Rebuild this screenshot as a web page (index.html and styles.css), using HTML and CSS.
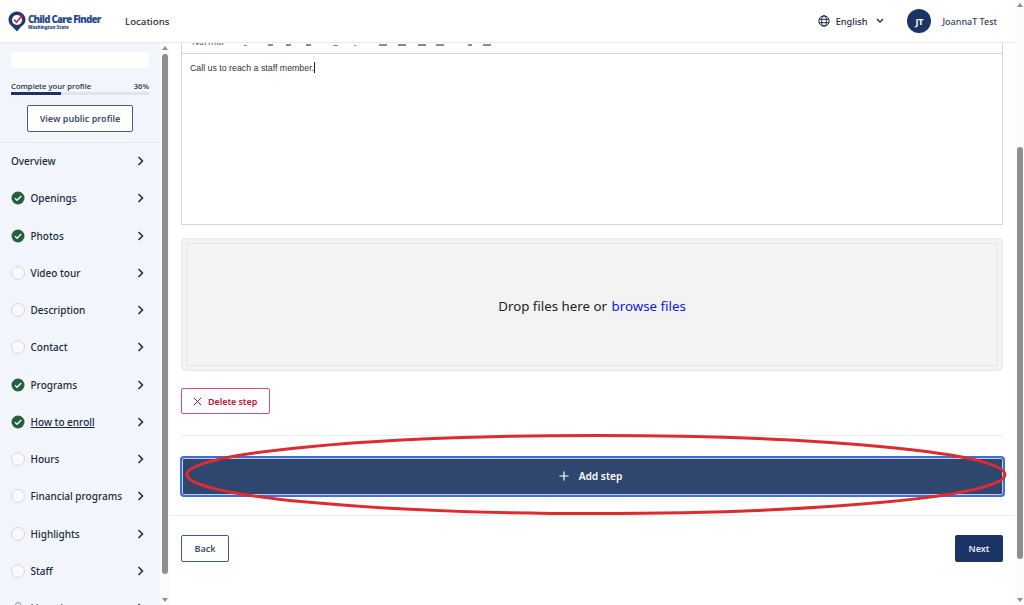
FILE: index.html
```html
<!DOCTYPE html>
<html lang="en">
<head>
<meta charset="utf-8">
<title>How to enroll</title>
<link rel="stylesheet" href="styles.css">
</head>
<body>
<div class="page">
  <div class="column">
    <header class="header">
      <div class="logo">
        <svg class="logo-pin" width="18" height="21" viewBox="0 0 18 21">
          <path d="M9 .5C4.200.5.500 4.200.500 8.800c0 3.200 1.900 5.400 4.200 7.300L9 20.500l3.800-4.400c2.500-1.900 4.700-4.100 4.700-7.300C17.500 4.200 13.800.5 9 .5z" fill="#1f3a6e"/>
          <circle cx="9" cy="9" r="5" fill="#fff"/>
          <path d="M6 8.500l2.500 2.700 6-7.200" fill="none" stroke="#c8203c" stroke-width="1.600"/>
        </svg>
        <div class="logo-text">
          <div class="logo-name">Child Care Finder</div>
          <div class="logo-sub">Washington State</div>
        </div>
      </div>
      <div class="nav-link">Locations</div>
      <div class="lang">
        <svg width="12" height="12" viewBox="0 0 12 12" fill="none" stroke="#1b2a41" stroke-width="1">
          <circle cx="6" cy="6" r="5.200"/><ellipse cx="6" cy="6" rx="2.400" ry="5.200"/><path d="M1 4.300h10M1 7.700h10"/>
        </svg>
        <span>English</span>
        <svg class="lang-caret" width="8" height="6" viewBox="0 0 8 6" fill="none" stroke="#1b2a41" stroke-width="1.300"><path d="M1 1l3 3 3-3"/></svg>
      </div>
      <div class="avatar">JT</div>
      <div class="user">JoannaT Test</div>
    </header>
    <div class="body">
      <aside class="sidebar">
        <div class="side-inner">
          <div class="name-box"></div>
          <div class="progress-row"><span>Complete your profile</span><span>36%</span></div>
          <div class="progress"><div class="progress-fill"></div></div>
          <div class="public-button">View public profile</div>
          <div class="side-line"></div>
          <ul class="menu">
            <li class="item"><span class="item-text">Overview</span><svg class="chev" viewBox="0 0 7 10"><path d="M1.500 1l4 4-4 4"/></svg></li>
            <li class="item"><svg class="check" viewBox="0 0 14 14"><circle cx="7" cy="7" r="6.500"/><path d="M4 7.200l2.100 2.100L10.200 5"/></svg><span class="item-text">Openings</span><svg class="chev" viewBox="0 0 7 10"><path d="M1.500 1l4 4-4 4"/></svg></li>
            <li class="item"><svg class="check" viewBox="0 0 14 14"><circle cx="7" cy="7" r="6.500"/><path d="M4 7.200l2.100 2.100L10.200 5"/></svg><span class="item-text">Photos</span><svg class="chev" viewBox="0 0 7 10"><path d="M1.500 1l4 4-4 4"/></svg></li>
            <li class="item"><span class="circle"></span><span class="item-text">Video tour</span><svg class="chev" viewBox="0 0 7 10"><path d="M1.500 1l4 4-4 4"/></svg></li>
            <li class="item"><span class="circle"></span><span class="item-text">Description</span><svg class="chev" viewBox="0 0 7 10"><path d="M1.500 1l4 4-4 4"/></svg></li>
            <li class="item"><span class="circle"></span><span class="item-text">Contact</span><svg class="chev" viewBox="0 0 7 10"><path d="M1.500 1l4 4-4 4"/></svg></li>
            <li class="item"><svg class="check" viewBox="0 0 14 14"><circle cx="7" cy="7" r="6.500"/><path d="M4 7.200l2.100 2.100L10.200 5"/></svg><span class="item-text">Programs</span><svg class="chev" viewBox="0 0 7 10"><path d="M1.500 1l4 4-4 4"/></svg></li>
            <li class="item"><svg class="check" viewBox="0 0 14 14"><circle cx="7" cy="7" r="6.500"/><path d="M4 7.200l2.100 2.100L10.200 5"/></svg><span class="item-text current">How to enroll</span><svg class="chev" viewBox="0 0 7 10"><path d="M1.500 1l4 4-4 4"/></svg></li>
            <li class="item"><span class="circle"></span><span class="item-text">Hours</span><svg class="chev" viewBox="0 0 7 10"><path d="M1.500 1l4 4-4 4"/></svg></li>
            <li class="item"><span class="circle"></span><span class="item-text">Financial programs</span><svg class="chev" viewBox="0 0 7 10"><path d="M1.500 1l4 4-4 4"/></svg></li>
            <li class="item"><span class="circle"></span><span class="item-text">Highlights</span><svg class="chev" viewBox="0 0 7 10"><path d="M1.500 1l4 4-4 4"/></svg></li>
            <li class="item"><span class="circle"></span><span class="item-text">Staff</span><svg class="chev" viewBox="0 0 7 10"><path d="M1.500 1l4 4-4 4"/></svg></li>
            <li class="item"><svg class="lock" viewBox="0 0 14 14"><rect x="2.500" y="6" width="9" height="7" rx="1"/><path d="M4.500 6V4a2.500 2.500 0 0 1 5 0v2"/></svg><span class="item-text">Licensing</span><svg class="chev" viewBox="0 0 7 10"><path d="M1.500 1l4 4-4 4"/></svg></li>
          </ul>
        </div>
        <div class="scrollbar side-bar">
          <span class="arrow-up"></span>
          <span class="thumb"></span>
          <span class="arrow-down"></span>
        </div>
      </aside>
      <main class="main">
        <div class="editor">
          <div class="toolbar">
            <span class="tool-name">Normal</span>
            <span class="tool t1"></span><span class="tool t2"></span><span class="tool t3"></span><span class="tool t4"></span>
            <span class="tool t5"></span><span class="tool t6"></span><span class="tool t7"></span><span class="tool t8"></span>
            <span class="tool t9"></span><span class="tool t10"></span><span class="tool t11"></span><span class="tool t12"></span>
          </div>
          <div class="editor-body">Call us to reach a staff member.<span class="caret"></span></div>
        </div>
        <div class="drop">
          <div class="drop-inner">Drop files here or&nbsp;<span class="browse">browse files</span></div>
        </div>
        <div class="delete-button">
          <svg width="9" height="9" viewBox="0 0 9 9" fill="none" stroke="#b5123f" stroke-width="1"><path d="M.8.8l7.400 7.400M8.200.8L.8 8.200"/></svg>
          <span>Delete step</span>
        </div>
        <div class="rule"></div>
        <div class="add-button">
          <svg width="10" height="10" viewBox="0 0 10 10" fill="none" stroke="#fff" stroke-width="1.200"><path d="M5 .5v9M.5 5h9"/></svg>
          <span>Add step</span>
        </div>
        <div class="footer">
          <div class="back">Back</div>
          <div class="next">Next</div>
        </div>
      </main>
    </div>
  </div>
  <div class="scrollbar page-bar">
    <span class="arrow-up"></span>
    <span class="thumb"></span>
    <span class="arrow-down"></span>
  </div>
  <svg class="annotation" width="1024" height="605" viewBox="0 0 1024 605">
    <ellipse cx="596" cy="474.500" rx="409" ry="39" fill="none" stroke="#dd2c2f" stroke-width="3"/>
  </svg>
</div>
</body>
</html>
```
FILE: styles.css
```css
* { box-sizing: border-box; }
html, body { margin: 0; height: 100%; overflow: hidden; }
body { background: #fff; font-family: "Noto Sans", "Open Sans", sans-serif; color: #1b2a41; }
.page { position: relative; display: flex; width: 1024px; height: 605px; overflow: hidden; }
.column { width: 1015px; display: flex; flex-direction: column; }

.header { position: relative; z-index: 2; flex: none; height: 43px; display: flex; align-items: center; background: #fff; border-bottom: 1px solid #e9ebef; padding-left: 8px; }
.logo { display: flex; align-items: center; width: 117px; gap: 2px; }
.logo-pin { flex: none; margin-top: 1px; }
.logo-text { display: flex; flex-direction: column; margin-top: 2px; }
.logo-name { font-family: "Open Sans", sans-serif; font-size: 9.700px; line-height: 11px; font-weight: 800; letter-spacing: -.72px; color: #2a4a8b; white-space: nowrap; }
.logo-sub { font-size: 4.500px; line-height: 5px; font-weight: 800; color: #1f3a6e; white-space: nowrap; }
.nav-link { font-size: 9.700px; font-weight: 500; color: #1b2a41; }
.lang { margin-left: auto; display: flex; align-items: center; font-size: 9.200px; font-weight: 500; }
.lang span { margin-left: 6px; }
.lang-caret { margin-left: 9px; }
.avatar { width: 24px; height: 24px; border-radius: 50%; background: #1c3464; color: #fff; font-size: 9px; font-weight: 700; display: flex; align-items: center; justify-content: center; margin-left: 23px; }
.user { font-size: 9px; font-weight: 500; margin-left: 11px; margin-right: 18px; color: #33415a; }

.body { flex: 1; min-height: 0; display: flex; }
.sidebar { flex: none; width: 170px; display: flex; background: #f2f6fc; overflow: hidden; }
.side-inner { width: 160px; flex: none; padding: 9px 11px 0; }
.name-box { height: 16px; background: #fff; border-radius: 4px; }
.progress-row { display: flex; justify-content: space-between; font-size: 7.700px; line-height: 11px; font-weight: 500; margin-top: 13px; }
.progress { height: 3px; background: #dfe3ee; margin-top: 0; }
.progress-fill { width: 36%; height: 3px; background: #1c3464; }
.public-button { width: 106px; height: 27px; margin: 10px 0 0 16px; border: 1px solid #3f5b8c; border-radius: 2px; background: #fff; font-size: 9px; font-weight: 600; color: #3b4d6d; display: flex; align-items: center; justify-content: center; }
.side-line { height: 1px; background: #e6e9ef; margin: 10px -11px 0; }
.menu { list-style: none; margin: 0; padding: 0; }
.item { height: 37.250px; display: flex; align-items: center; font-size: 10px; font-weight: 500; white-space: nowrap; }
.item:first-child { margin-top: -.500px; }
.item-text { flex: 1; }
.current { flex: none; margin-right: auto; text-decoration: underline; }
.check { flex: none; width: 14px; height: 14px; margin-right: 5.500px; }
.check circle { fill: #24603a; }
.check path { fill: none; stroke: #fff; stroke-width: 1.300; }
.circle { flex: none; width: 14px; height: 14px; margin-right: 5.500px; border: 1px solid #d6d9df; border-radius: 50%; background: #f7f9fc; }
.lock { flex: none; width: 14px; height: 14px; margin-right: 5.500px; fill: none; stroke: #8a8f98; stroke-width: 1; }
.chev { flex: none; width: 7px; height: 10px; margin-right: 5px; fill: none; stroke: #1b2a41; stroke-width: 1.500; }

.scrollbar { position: relative; flex: none; display: flex; flex-direction: column; align-items: center; background: #fbfbfb; }
.side-bar { width: 10px; }
.page-bar { width: 9px; height: 605px; }
.thumb { position: absolute; background: #8f8f8f; border-radius: 4px; }
.side-bar .thumb { top: 11px; bottom: 31px; left: 1.500px; width: 6px; }
.page-bar .thumb { top: 147px; bottom: 46px; left: 2px; width: 6px; }
.arrow-up, .arrow-down { position: absolute; width: 0; height: 0; border-left: 3px solid transparent; border-right: 3px solid transparent; }
.arrow-up { top: 3px; border-bottom: 4px solid #8f8f8f; }
.arrow-down { bottom: 3px; border-top: 4px solid #8f8f8f; }

.main { flex: 1; min-width: 0; overflow: hidden; display: flex; flex-direction: column; }
.editor { flex: none; margin: -9px 12px 0 11px; height: 191px; border: 1px solid #d6d6d6; border-top: 0; }
.toolbar { position: relative; height: 20px; border-bottom: 1px solid #d6d6d6; display: flex; align-items: flex-end; }
.tool-name { font-size: 9px; line-height: 12px; color: #555; margin: 0 0 5px 10px; width: 51.500px; }
.tool { height: 1.500px; width: 8px; background: #8a8a8a; margin-bottom: 7.500px; }
.t1 { width: 3px; margin-right: 21px; height: 1px; }
.t2 { margin-right: 13px; width: 5px; }
.t3 { margin-right: 15px; width: 5px; }
.t4 { margin-right: 22px; width: 5px; }
.t5 { width: 5px; margin-right: 16.500px; height: 1px; }
.t6 { width: 2px; margin-right: 23px; height: 1px; }
.t7 { margin-right: 11px; }
.t8 { margin-right: 12px; }
.t9 { margin-right: 10px; }
.t10 { margin-right: 24px; }
.t11 { width: 4px; margin-right: 11px; }
.t12 { width: 8px; }
.editor-body { font-family: "Liberation Sans", sans-serif; font-size: 8.800px; padding: 8px; line-height: 13px; color: #333; }
.caret { display: inline-block; width: 1px; height: 11px; background: #222; vertical-align: -2px; }
.drop { flex: none; margin: 13px 12px 0 11px; height: 133px; background: #f3f3f3; border: 1px solid #e8e8e8; border-radius: 4px; padding: 4px; }
.drop-inner { height: 100%; padding-top: 2px; border: 1px solid #e4e4e4; border-radius: 2px; display: flex; align-items: center; justify-content: center; font-size: 13.300px; color: #222; }
.browse { color: #1414f0; margin-left: 1px; }
.delete-button { flex: none; align-self: flex-start; margin: 17px 0 0 11px; width: 89px; height: 26px; border: 1px solid #c9557a; border-radius: 2px; display: flex; align-items: center; padding-left: 11px; gap: 6px; font-size: 8.900px; font-weight: 600; color: #b5123f; }
.rule { flex: none; height: 1px; background: #eeeeee; margin: 21px 12px 0 11px; }
.add-button { flex: none; margin: 20px 10px 0 10px; height: 41px; background: #2f466e; border: 2px solid #3a6fe0; border-radius: 4px; box-shadow: inset 0 0 0 1px #c8ced8; display: flex; align-items: center; justify-content: center; gap: 10px; font-size: 10.200px; font-weight: 600; color: #fff; }
.add-button svg { margin-left: -4px; margin-top: -2px; }
.add-button span { margin-top: -1px; }
.footer { flex: none; margin-top: 18px; border-top: 1px solid #eeeeee; padding: 19px 12px 0 11px; display: flex; justify-content: space-between; }
.back, .next { width: 48px; height: 27px; border-radius: 2px; display: flex; align-items: center; justify-content: center; font-size: 9px; font-weight: 600; }
.back { border: 1px solid #3f5b8c; color: #3b4d6d; background: #fff; }
.next { background: #1c3464; color: #e6ebf3; }
.annotation { position: absolute; inset: 0; z-index: 3; pointer-events: none; }
```
